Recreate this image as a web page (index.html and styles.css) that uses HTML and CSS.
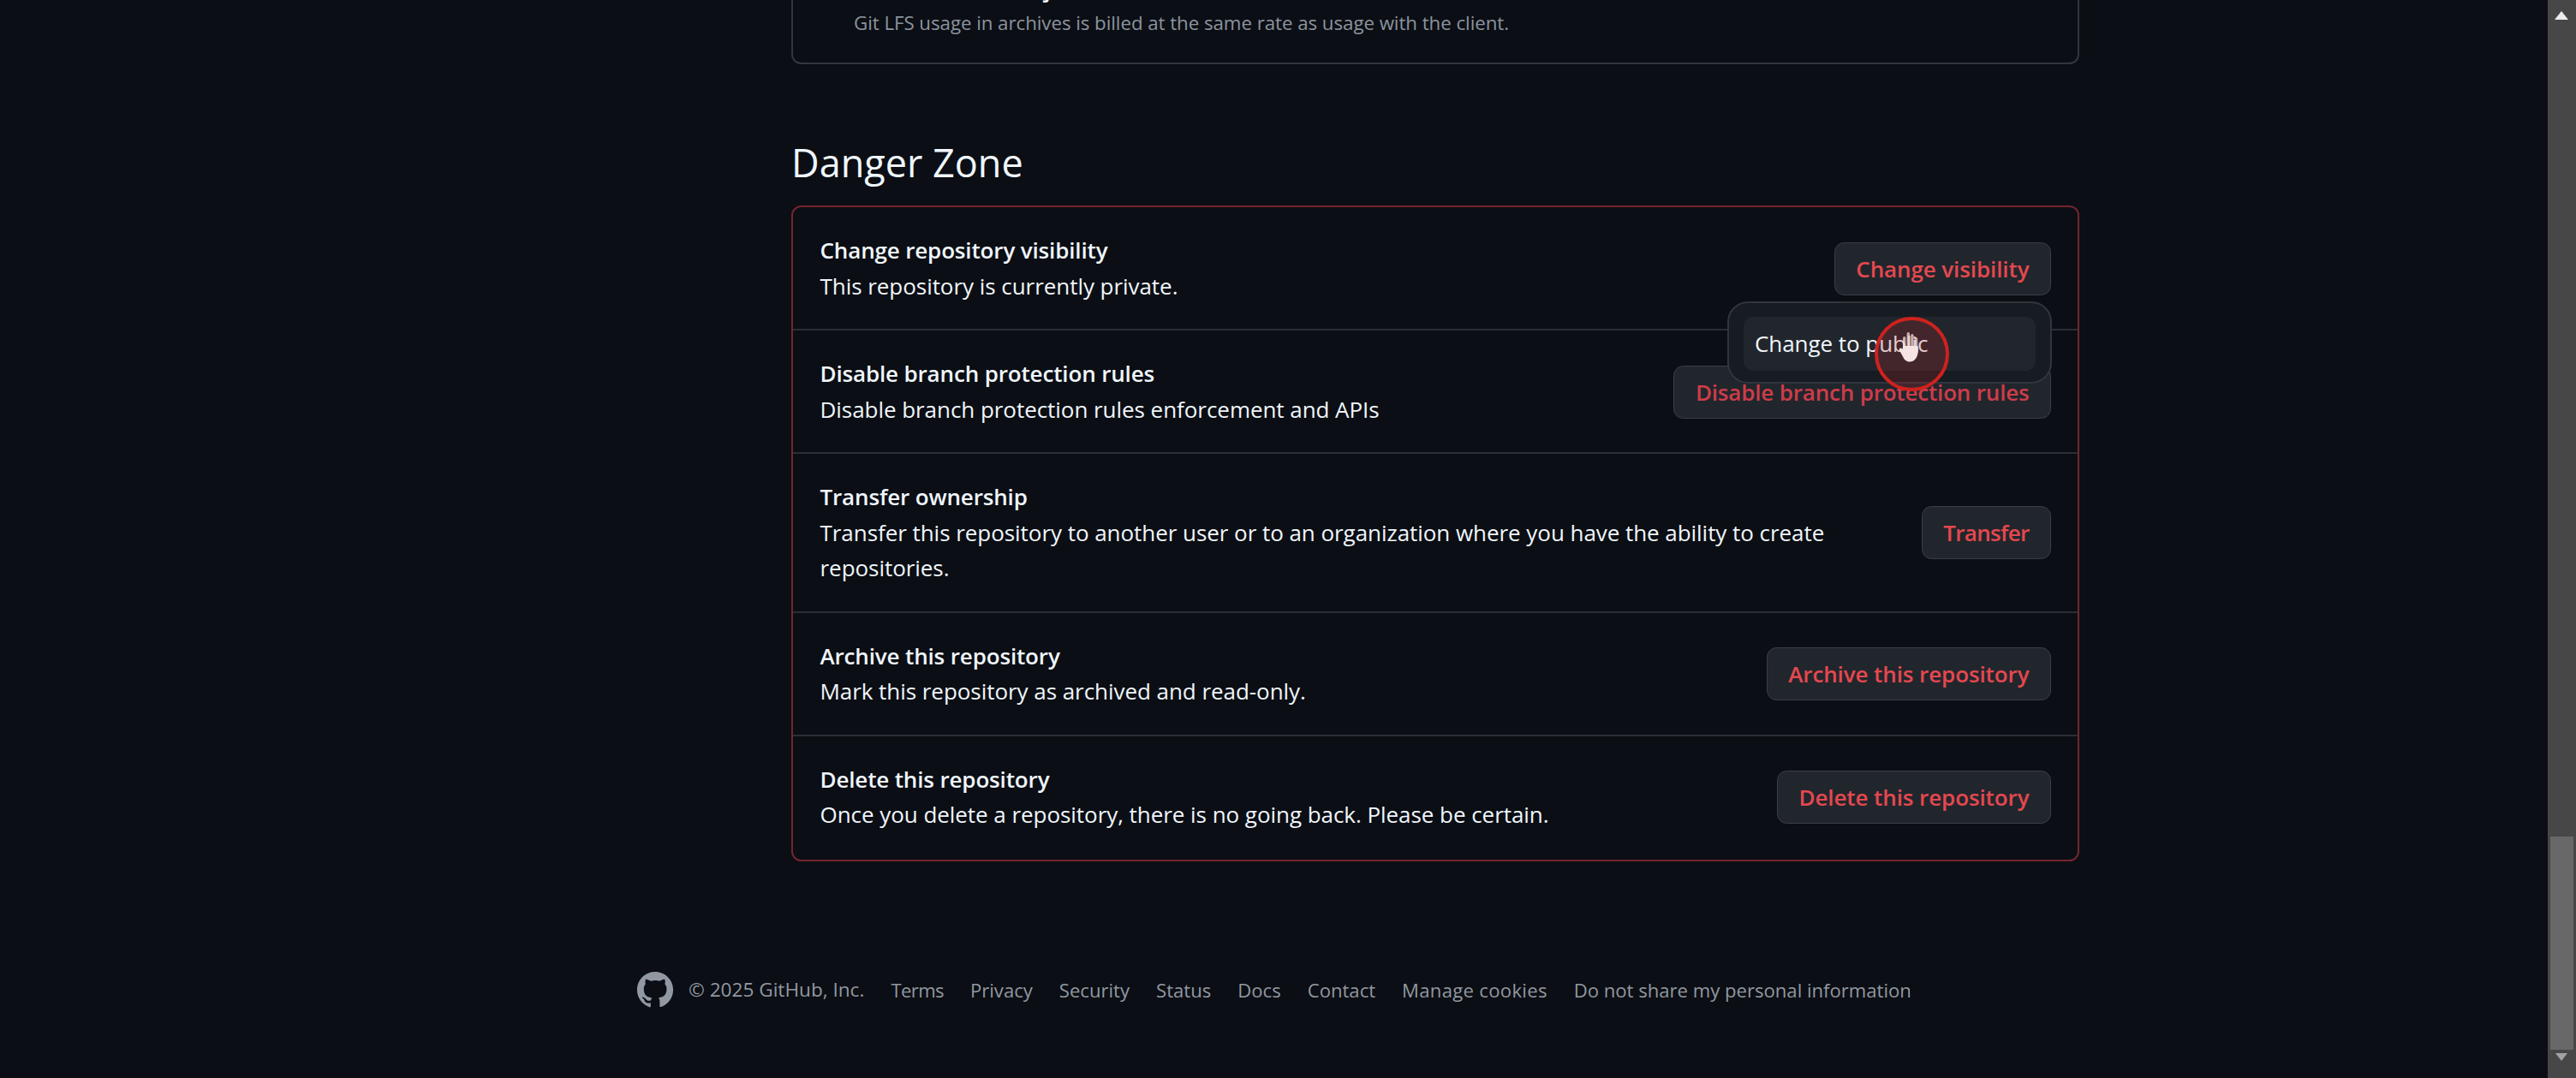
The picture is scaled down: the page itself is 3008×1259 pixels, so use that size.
FILE: index.html
```html
<!DOCTYPE html>
<html lang="en">
<head>
<meta charset="utf-8">
<title>Danger Zone</title>
<link rel="stylesheet" href="styles.css">
</head>
<body>
<div class="viewport">
  <main class="page">
    <div class="column">
      <section class="lfs-card">
        <div class="lfs-title">Include Git LFS objects in archives</div>
        <div class="lfs-note">Git LFS usage in archives is billed at the same rate as usage with the client.</div>
      </section>
      <h2 class="zone-title">Danger Zone</h2>
      <section class="zone-card">
        <div class="row">
          <div class="row-text"><div class="row-title">Change repository visibility</div><div class="row-desc">This repository is currently private.</div></div>
          <div class="btn-wrap">
            <button class="btn">Change visibility</button>
            <div class="menu"><div class="menu-item">Change to public</div></div>
          </div>
        </div>
        <div class="row">
          <div class="row-text"><div class="row-title">Disable branch protection rules</div><div class="row-desc">Disable branch protection rules enforcement and APIs</div></div>
          <button class="btn btn-dim">Disable branch protection rules</button>
        </div>
        <div class="row">
          <div class="row-text"><div class="row-title">Transfer ownership</div><div class="row-desc">Transfer this repository to another user or to an organization where you have the ability to create repositories.</div></div>
          <button class="btn btn-tight">Transfer</button>
        </div>
        <div class="row">
          <div class="row-text"><div class="row-title">Archive this repository</div><div class="row-desc">Mark this repository as archived and read-only.</div></div>
          <button class="btn">Archive this repository</button>
        </div>
        <div class="row">
          <div class="row-text"><div class="row-title">Delete this repository</div><div class="row-desc">Once you delete a repository, there is no going back. Please be certain.</div></div>
          <button class="btn">Delete this repository</button>
        </div>
      </section>
    </div>
    <footer class="footer">
      <svg class="logo" viewBox="0 0 24 24" aria-hidden="true"><path d="M12 1C5.900 1 1 5.900 1 12c0 4.900 3.200 9 7.500 10.500.6.100.8-.2.8-.5v-2c-3.100.7-3.700-1.300-3.700-1.300-.5-1.300-1.200-1.600-1.200-1.600-1-.7.100-.7.100-.7 1.100.1 1.700 1.100 1.700 1.100 1 1.700 2.600 1.200 3.200.9.100-.7.400-1.200.7-1.500-2.500-.3-5-1.200-5-5.400 0-1.200.4-2.200 1.100-3-.1-.3-.5-1.400.1-2.900 0 0 .9-.3 3 1.100a10.400 10.400 0 0 1 5.500 0c2.100-1.400 3-1.100 3-1.100.6 1.500.2 2.600.1 2.900.7.800 1.100 1.800 1.100 3 0 4.200-2.600 5.100-5 5.400.4.300.8 1 .8 2v3c0 .3.2.600.8.500C19.800 21 23 16.900 23 12c0-6.100-4.900-11-11-11Z"/></svg>
      <span class="copy">© 2025 GitHub, Inc.</span>
      <nav class="foot-links">
        <a>Terms</a><a>Privacy</a><a>Security</a><a>Status</a><a>Docs</a><a>Contact</a><a>Manage cookies</a><a>Do not share my personal information</a>
      </nav>
    </footer>
    <div class="cursor" aria-hidden="true">
      <svg class="hand" viewBox="0 0 25 35">
        <g class="fingers"><rect x="5" y="5" width="3.400" height="16" rx="1.700"/><rect x="9.600" y="0" width="3.400" height="20" rx="1.700"/><rect x="14.200" y="2" width="3.400" height="18" rx="1.700"/><rect x="18.800" y="6" width="3.400" height="16" rx="1.700"/></g>
        <path d="M5 16h17.500c.8 3 .7 7-.5 10.500-1.200 4.500-4.500 8-9 8-4 0-6.500-2.500-8-6L.8 21c-.8-2 1.500-3.500 3-2L5 20Z"/>
      </svg>
    </div>
  </main>
  <aside class="scrollbar" aria-hidden="true">
    <div class="sb-arrow sb-up"></div>
    <div class="sb-track"><div class="sb-thumb"></div></div>
    <div class="sb-arrow sb-down"></div>
  </aside>
</div>
</body>
</html>
```

FILE: styles.css
```css
* { box-sizing: border-box; }
html, body { margin: 0; height: 100%; overflow: hidden; }
body { background: #0b0e14; color: #f0f6fc; font-family: "Open Sans", "Noto Sans", sans-serif; font-size: 26px; line-height: 41.5px; letter-spacing: -0.05px; }
.viewport { display: flex; height: 1259px; }
.page { flex: 1; min-width: 0; position: relative; overflow: hidden; }
.column { width: 1504px; margin-left: 924px; }
.lfs-card { height: 148px; margin-top: -73px; border: 2px solid #30363d; border-top: 0; border-radius: 0 0 11.500px 11.500px; padding: 32px 32px 0 71px; }
.lfs-title { font-size: 26px; font-weight: 600; line-height: 40px; height: 40px; margin-top: 8px; }
.lfs-note { font-size: 22.300px; line-height: 32px; color: #8b949e; margin-top: 4px; }
.zone-title { margin: 84px 0 0; font-size: 45px; font-weight: 400; line-height: 62px; height: 81px; letter-spacing: 0; }
.zone-card { border: 2px solid #732530; border-radius: 11.500px; }
.row { display: flex; align-items: center; justify-content: space-between; gap: 30px; padding: 30px 31px 29px 31.500px; border-top: 2px solid #2a2e35; }
.row:first-child { border-top: 0; }
.row:last-child { padding-bottom: 31px; }
.row-text { flex: 1; min-width: 0; }
.row-title { font-weight: 600; letter-spacing: -0.15px; }
.btn-wrap { position: relative; }
.btn { height: 62px; padding: 0 24.500px; border: 1.500px solid #3a3f47; border-radius: 11.500px; background: #21262d; color: #e5484f; font: 600 26px/1 "Open Sans", "Noto Sans", sans-serif; letter-spacing: -0.1px; white-space: nowrap; flex: none; }
.btn-dim { color: #cf3c49; letter-spacing: -0.18px; }
.btn-tight { letter-spacing: -0.7px; }
.menu { position: absolute; z-index: 2; top: 69px; right: -1px; width: 379px; height: 96px; padding: 16px 17px; background: #171b22; border: 2px solid #30363d; border-radius: 24px; }
.menu-item { height: 63px; padding-left: 13px; line-height: 63px; background: #21262d; border-radius: 11.500px; color: #f0f6fc; }
.footer { display: flex; align-items: center; margin: 127px 0 0 742px; color: #9198a1; font-size: 22.100px; line-height: 46px; letter-spacing: 0; }
.logo { width: 46px; height: 46px; fill: #9198a1; flex: none; }
.copy { margin-left: 16px; font-size: 22.600px; }
.foot-links { display: flex; gap: 31px; margin-left: 31px; }
.foot-links a:first-child { letter-spacing: -0.6px; }
.foot-links a:nth-last-child(2) { letter-spacing: 0.3px; }
.cursor { position: absolute; left: 2189px; top: 370px; width: 87px; height: 87px; border-radius: 50%; border: 4px solid #cf221e; background: rgba(190, 40, 40, .22); z-index: 3; }
.hand { position: absolute; left: 24px; top: 14px; width: 25px; height: 35px; fill: #f6e4e4; }
.fingers { opacity: .72; }
.scrollbar { width: 33px; flex: none; display: flex; flex-direction: column; background: #474747; }
.sb-arrow { height: 33px; flex: none; position: relative; }
.sb-arrow::after { content: ""; position: absolute; left: 9px; border-left: 7.500px solid transparent; border-right: 7.500px solid transparent; }
.sb-up::after { top: 13px; left: 8px; border-left-width: 8px; border-right-width: 8px; border-bottom: 10px solid #ececec; }
.sb-down::after { top: 4px; border-top: 9px solid #a3a3a3; }
.sb-track { flex: 1; position: relative; }
.sb-thumb { position: absolute; left: 3px; right: 3px; bottom: 0; height: 249px; background: #686868; }
```
